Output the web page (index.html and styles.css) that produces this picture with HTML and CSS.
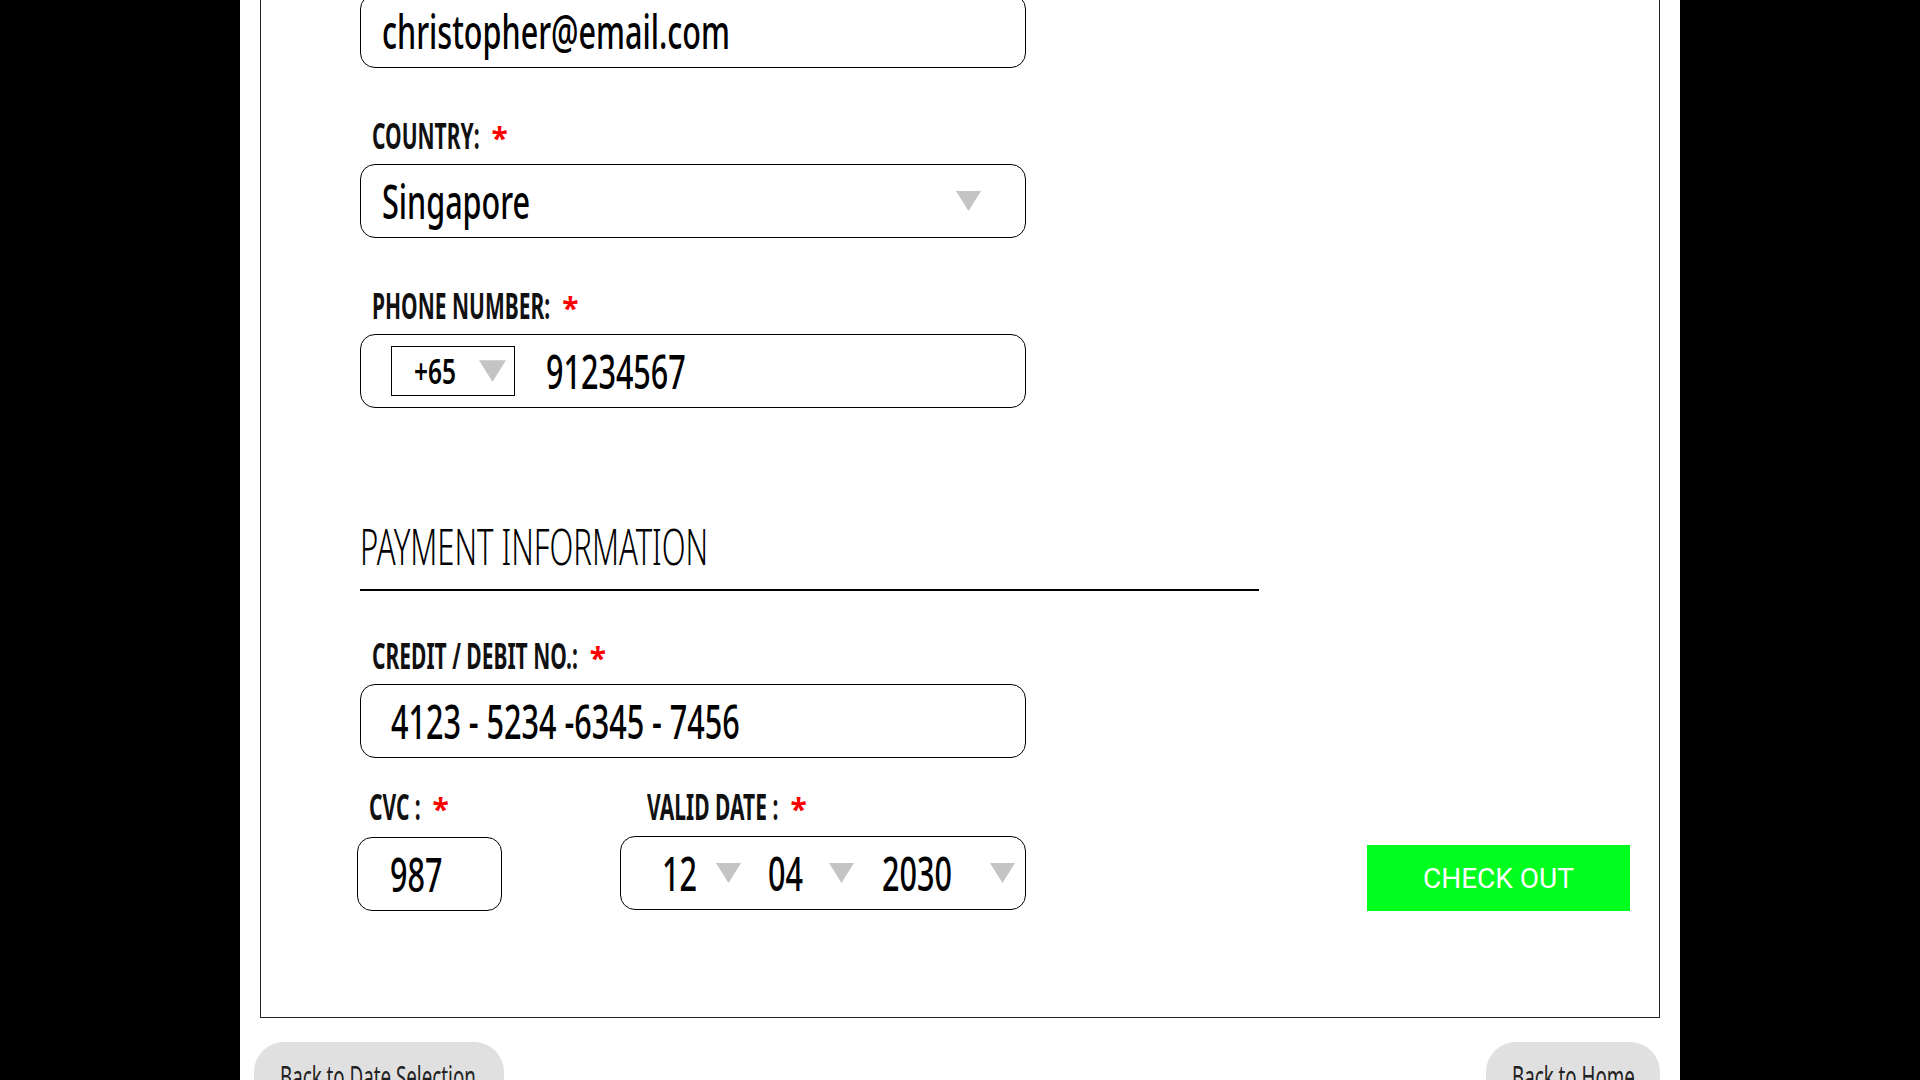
FILE: index.html
```html
<!DOCTYPE html>
<html lang="en">
<head>
<meta charset="utf-8">
<title>Checkout</title>
<link rel="stylesheet" href="styles.css">
</head>
<body>
<div class="page">
  <section class="card">
    <div class="field field-first">
      <div class="box"><span class="value">christopher@email.com</span></div>
    </div>

    <div class="field">
      <div class="label"><span class="lt">COUNTRY:<span class="req">*</span></span></div>
      <div class="box box-select">
        <span class="value">Singapore</span>
        <svg class="caret" viewBox="0 0 25 20"><polygon points="0,0 25,0 12.5,20"/></svg>
      </div>
    </div>

    <div class="field">
      <div class="label"><span class="lt">PHONE NUMBER:<span class="req">*</span></span></div>
      <div class="box box-phone">
        <div class="code">
          <span class="code-value">+65</span>
          <svg class="caret caret-sm" viewBox="0 0 25 20"><polygon points="0,0 25,0 12.5,20"/></svg>
        </div>
        <span class="value">91234567</span>
      </div>
    </div>

    <h2 class="section-title"><span class="title-text">PAYMENT INFORMATION</span></h2>

    <div class="field field-card">
      <div class="label"><span class="lt">CREDIT / DEBIT NO.:<span class="req">*</span></span></div>
      <div class="box box-cardno"><span class="value">4123 - 5234 -6345 - 7456</span></div>
    </div>

    <div class="row-last">
      <div class="field field-cvc">
        <div class="label"><span class="lt">CVC :<span class="req">*</span></span></div>
        <div class="box box-cvc"><span class="value">987</span></div>
      </div>
      <div class="field field-date">
        <div class="label"><span class="lt">VALID DATE :<span class="req">*</span></span></div>
        <div class="box box-date">
          <div class="seg seg-mm"><span class="value">12</span><svg class="caret" viewBox="0 0 25 20"><polygon points="0,0 25,0 12.5,20"/></svg></div>
          <div class="seg seg-dd"><span class="value">04</span><svg class="caret" viewBox="0 0 25 20"><polygon points="0,0 25,0 12.5,20"/></svg></div>
          <div class="seg seg-yy"><span class="value">2030</span><svg class="caret" viewBox="0 0 25 20"><polygon points="0,0 25,0 12.5,20"/></svg></div>
        </div>
      </div>
      <button class="checkout">CHECK OUT</button>
    </div>
  </section>

  <nav class="bottom-nav">
    <button class="back back-date"><span class="back-text">Back to Date Selection</span></button>
    <button class="back back-home"><span class="back-text">Back to Home</span></button>
  </nav>
</div>
</body>
</html>
```
FILE: styles.css
```css
html, body {
  margin: 0;
  padding: 0;
  background: #000;
  height: 1080px;
  overflow: hidden;
}

body {
  font-family: "Noto Sans", "DejaVu Sans", sans-serif;
  color: #000;
}

.page {
  width: 1440px;
  height: 1080px;
  margin: 0 auto;
  background: #fff;
  padding: 0 20px;
  box-sizing: border-box;
  overflow: hidden;
}

.card {
  margin-top: -60px;
  border: 1px solid #222;
  padding: 53px 0 106px 99px;
}

.field {
  margin-top: 48px;
  width: 666px;
}

.field-first {
  margin-top: 0;
}

/* labels: condensed look via horizontal scale */
.label {
  font-size: 35px;
  font-weight: 700;
  line-height: 40px;
  height: 40px;
  padding-left: 12px;
  margin-bottom: 8px;
  color: #111;
  white-space: nowrap;
}

.lt {
  display: inline-block;
  transform: scaleX(0.6);
  transform-origin: left center;
}

.req {
  display: inline-block;
  color: #ff0000;
  font-size: 30px;
  font-weight: 700;
  margin-left: 20px;
  transform: scaleX(1.667);
  transform-origin: left center;
}

.box {
  box-sizing: border-box;
  height: 74px;
  border: 1px solid #000;
  border-radius: 15px;
  display: flex;
  align-items: center;
  padding-left: 21px;
}

.value {
  display: inline-block;
  font-size: 47px;
  font-weight: 500;
  white-space: nowrap;
  transform: scaleX(0.65);
  transform-origin: left center;
}

.box-select {
  justify-content: space-between;
  padding-right: 44px;
}

.caret {
  width: 25px;
  height: 20px;
  fill: #c4c4c4;
  flex: none;
}

.box-phone {
  padding-left: 30px;
}

.code {
  box-sizing: border-box;
  width: 124px;
  height: 50px;
  border: 1px solid #000;
  display: flex;
  align-items: center;
  justify-content: space-between;
  padding: 0 8px 0 22px;
  margin-right: 31px;
}

.code-value {
  display: inline-block;
  font-size: 34px;
  font-weight: 600;
  transform: scaleX(0.72);
  transform-origin: left center;
}

.caret-sm {
  width: 27px;
  height: 22px;
}

.section-title {
  margin: 108px 0 0;
  width: 899px;
  font-size: 50px;
  font-weight: 300;
  line-height: 60px;
  padding-bottom: 13px;
  border-bottom: 2px solid #000;
  white-space: nowrap;
}

.title-text {
  display: inline-block;
  transform: scaleX(0.62);
  transform-origin: left center;
}

.field-card {
  margin-top: 45px;
}

.box-cardno {
  padding-left: 30px;
}

.row-last {
  display: flex;
  align-items: flex-end;
  margin-top: 29px;
  padding-right: 29px;
}

.row-last .field {
  margin-top: 0;
  width: auto;
}

.field-cvc {
  margin-left: -3px;
}

.field-cvc .label {
  margin-bottom: 10px;
}

.box-cvc {
  width: 145px;
  padding-left: 32px;
}

.field-date {
  margin-left: 118px;
}

.field-date .label {
  padding-left: 27px;
  margin-bottom: 9px;
}

.box-date {
  width: 406px;
  padding-left: 41px;
  margin-bottom: 1px;
  gap: 28px;
}

.seg {
  display: flex;
  align-items: center;
  justify-content: space-between;
}

.seg-mm { width: 78px; }
.seg-dd { width: 86px; }
.seg-yy { width: 129px; }

.checkout {
  margin-left: auto;
  width: 263px;
  height: 66px;
  border: none;
  border-radius: 0;
  background: #00ff1e;
  color: #fff;
  font-family: Roboto, "Liberation Sans", sans-serif;
  font-size: 28px;
  font-weight: 400;
  padding: 0;
}

.bottom-nav {
  display: flex;
  justify-content: space-between;
  margin: 24px 0 0 -6px;
}

.back {
  box-sizing: border-box;
  height: 80px;
  border: none;
  background: #e0e0e0;
  border-radius: 30px;
  font-family: "Noto Sans", "DejaVu Sans", sans-serif;
  font-size: 30px;
  color: #222;
  padding: 14px 0 0 26px;
  display: flex;
  align-items: flex-start;
  justify-content: flex-start;
  white-space: nowrap;
}

.back-text {
  display: inline-block;
  transform: scaleX(0.625);
  transform-origin: left center;
}

.back-date { width: 250px; }
.back-home { width: 174px; }
```
